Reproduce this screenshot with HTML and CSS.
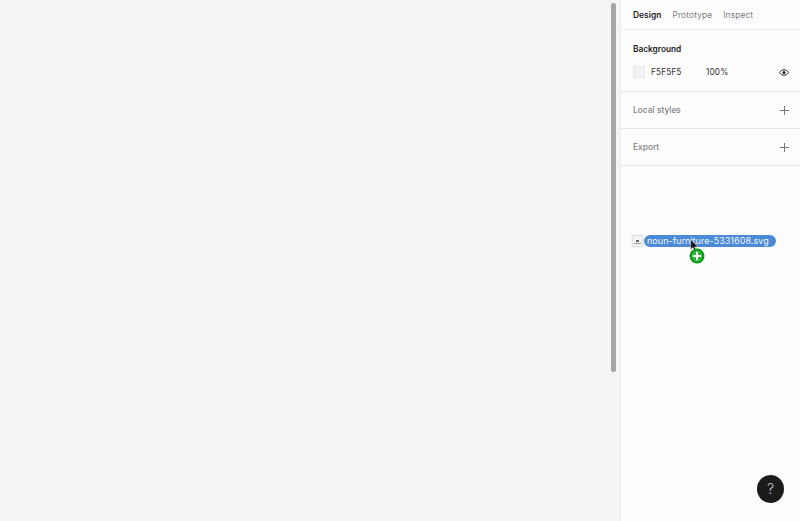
FILE: index.html
```html
<!DOCTYPE html>
<html lang="en">
<head>
<meta charset="utf-8">
<title>Design panel</title>
<link rel="stylesheet" href="styles.css">
</head>
<body>
<div class="app">
  <main class="canvas">
    <div class="scrollbar"></div>
  </main>
  <aside class="panel">
    <nav class="tabs">
      <span class="tab active">Design</span>
      <span class="tab">Prototype</span>
      <span class="tab">Inspect</span>
    </nav>
    <section class="background">
      <h2 class="title">Background</h2>
      <div class="fill">
        <span class="swatch"></span>
        <span class="hex">F5F5F5</span>
        <span class="pct">100%</span>
        <svg class="eye" width="10" height="7" viewBox="0 0 12 8"><path d="M.6 4C2 1.800 3.900.7 6 .7S10 1.800 11.400 4C10 6.200 8.100 7.300 6 7.300S2 6.200.6 4Z" fill="none" stroke="#222" stroke-width="1.200"/><circle cx="6" cy="4" r="1.800" fill="#222"/></svg>
      </div>
    </section>
    <section class="row">
      <span class="row-label">Local styles</span>
      <svg width="9" height="9" viewBox="0 0 9 9"><path d="M4.500 0v9M0 4.500h9" stroke="#777" stroke-width="1"/></svg>
    </section>
    <section class="row">
      <span class="row-label">Export</span>
      <svg width="9" height="9" viewBox="0 0 9 9"><path d="M4.500 0v9M0 4.500h9" stroke="#777" stroke-width="1"/></svg>
    </section>
  </aside>
</div>

<div class="drag">
  <span class="file-icon"><span class="file-dot"></span><span class="file-mark"></span></span>
  <span class="file-name">noun-furniture-5331608.svg</span>
</div>
<svg class="cursor" width="9" height="13" viewBox="0 0 9 13"><path d="M.7.500V10.500L3 8.500 4.700 12 6.300 11.200 4.700 7.900H8Z" fill="#111" stroke="#ddd" stroke-width=".6"/></svg>
<svg class="copy-badge" width="16" height="16" viewBox="0 0 16 16"><circle cx="8" cy="8" r="7.500" fill="#0a9a1a"/><circle cx="8" cy="8" r="5.500" fill="#2cb835"/><path d="M8 3.800v8.400M3.800 8h8.400" stroke="#fff" stroke-width="2"/></svg>
<button class="help" type="button">?</button>
</body>
</html>
```

FILE: styles.css
```css
* { box-sizing: border-box; }
html, body { margin: 0; height: 100%; overflow: hidden; }
body { font-family: Inter, "Liberation Sans", sans-serif; color: #1c1c1c; background: #fff; }

.app { display: flex; height: 521px; }
.canvas { position: relative; flex: 0 0 620px; background: #f4f3f5; }
.scrollbar { position: absolute; left: 611px; top: 3px; width: 5px; height: 369px; border-radius: 3px; background: #a5a5a7; }

.panel { flex: 1; background: #fefdfe; border-left: 1px solid #eceaed; }
.tabs { display: flex; gap: 11px; align-items: center; height: 30px; padding: 0 12px; border-bottom: 1px solid #ebeaec; font-size: 8.400px; color: #7c7c7e; }
.tab { letter-spacing: .12px; }
.tab.active { color: #1c1c1c; font-weight: 600; letter-spacing: .05px; }

.background { height: 62px; padding: 13px 11px 0 12px; border-bottom: 1px solid #e6e5e7; }
.title { margin: 0; font-size: 8.300px; line-height: 13px; font-weight: 600; }
.fill { display: flex; align-items: center; margin-top: 10px; font-size: 8.300px; letter-spacing: .1px; color: #333; }
.swatch { width: 12px; height: 12px; background: #f3f2f4; border: 1px solid #e8e7e9; }
.hex { margin-left: 6px; width: 55px; }
.pct { flex: 1; }

.row { display: flex; align-items: center; justify-content: space-between; height: 37px; padding: 0 11px 0 12px; border-bottom: 1px solid #e6e5e7; }
.row-label { font-size: 8.300px; font-weight: 500; letter-spacing: .05px; color: #808082; }

.drag { position: absolute; left: 632px; top: 235px; display: flex; align-items: center; }
.file-icon { display: flex; flex-direction: column; align-items: center; justify-content: flex-end; gap: 1px; width: 11px; height: 12px; padding-bottom: 2px; background: #f4f4f4; border: 1px solid #e2e2e2; box-shadow: 0 0 2px rgba(0,0,0,.15); }
.file-dot { width: 3px; height: 2px; background: #666; }
.file-mark { width: 7px; height: 1px; background: #999; }
.file-name { margin-left: 1px; width: 132px; height: 12px; padding-left: 3px; border-radius: 6px; background: #4a8ad6; color: #f2f6fc; font-size: 9px; line-height: 12px; letter-spacing: .04px; white-space: nowrap; }

.cursor { position: absolute; left: 690px; top: 239px; }
.copy-badge { position: absolute; left: 689px; top: 248px; }

.help { position: absolute; left: 757px; top: 475px; width: 27px; height: 28px; padding: 0; border: 0; border-radius: 50%; background: #1b1b1c; color: #c9c9c9; font-family: Inter, "Liberation Sans", sans-serif; font-size: 14px; font-weight: 300; line-height: 28px; text-align: center; }
```
